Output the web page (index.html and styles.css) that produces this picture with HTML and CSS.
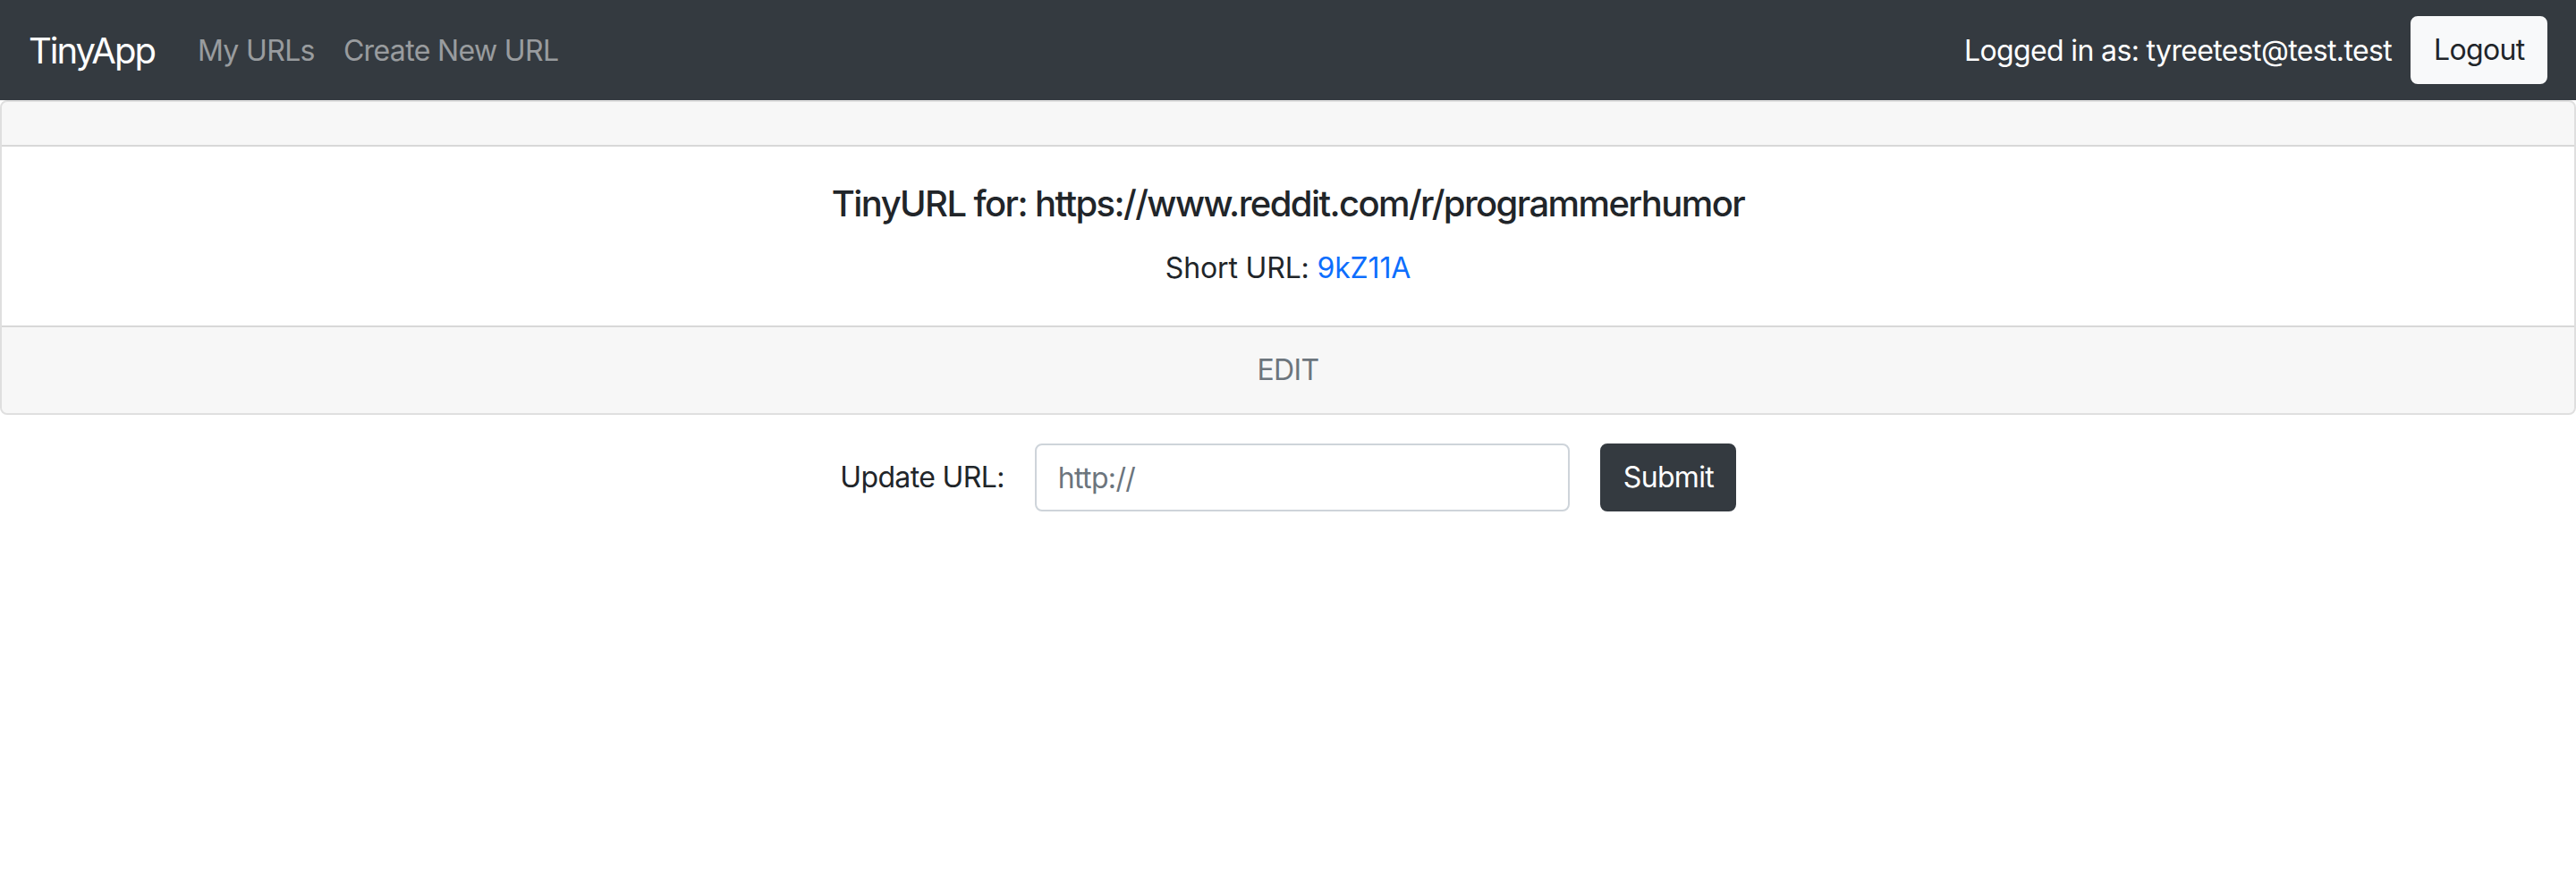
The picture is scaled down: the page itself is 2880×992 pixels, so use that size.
FILE: index.html
```html
<!DOCTYPE html>
<html lang="en">
<head>
<meta charset="utf-8">
<title>TinyApp</title>
<link rel="stylesheet" href="styles.css">
</head>
<body>
<nav class="navbar">
  <div class="nav-left">
    <a class="brand" href="#">TinyApp</a>
    <a class="nav-link" href="#">My URLs</a>
    <a class="nav-link" href="#">Create New URL</a>
  </div>
  <div class="nav-right">
    <span class="user">Logged in as: tyreetest@test.test</span>
    <button class="btn btn-light" type="button">Logout</button>
  </div>
</nav>
<div class="card">
  <div class="card-header"></div>
  <div class="card-body">
    <h5 class="card-title">TinyURL for: https://www.reddit.com/r/programmerhumor</h5>
    <p class="card-text">Short URL: <a class="link" href="#">9kZ11A</a></p>
  </div>
  <div class="card-footer">EDIT</div>
</div>
<form class="update-form">
  <label class="form-label" for="longURL">Update URL:</label>
  <input class="form-input" id="longURL" type="text" placeholder="http://">
  <button class="btn btn-dark" type="submit">Submit</button>
</form>
</body>
</html>
```

FILE: styles.css
```css
html, body {
  margin: 0;
  padding: 0;
  background: #fff;
}
body {
  font-family: Inter, "Noto Sans", "Liberation Sans", sans-serif;
  font-size: 32px;
  line-height: 1.5;
  letter-spacing: -0.02em;
  color: #212529;
}
a { text-decoration: none; }

.navbar {
  height: 112px;
  box-sizing: border-box;
  background: #343a40;
  padding: 2px 32px 0;
  display: flex;
  align-items: center;
  justify-content: space-between;
}
.nav-left, .nav-right {
  display: flex;
  align-items: center;
}
.brand {
  color: #fff;
  font-size: 40px;
  letter-spacing: -0.05em;
  line-height: 60px;
  margin-right: 32px;
}
.nav-link {
  color: rgba(255,255,255,.5);
  padding: 16px;
  line-height: 48px;
}
.user {
  color: #fff;
  margin-right: 21px;
  white-space: nowrap;
}
.btn {
  font-family: inherit;
  font-size: 32px;
  letter-spacing: -0.02em;
  line-height: 48px;
  height: 76px;
  padding: 0 24px;
  border-radius: 8px;
  border: 2px solid transparent;
  box-sizing: border-box;
  cursor: pointer;
}
.nav-right .btn {
  margin-top: -2px;
}
.btn-light {
  background: #f8f9fa;
  border-color: #f8f9fa;
  color: #212529;
  width: 153px;
}
.btn-dark {
  background: #343a40;
  border-color: #343a40;
  color: #fff;
  width: 152px;
}

.card {
  border: 2px solid rgba(0,0,0,.125);
  border-radius: 8px;
  overflow: hidden;
  text-align: center;
}
.card-header {
  height: 48px;
  background: rgba(0,0,0,.03);
  border-bottom: 2px solid rgba(0,0,0,.125);
}
.card-body {
  padding: 40px;
}
.card-title {
  margin: 0 0 24px;
  font-size: 40px;
  letter-spacing: -0.04em;
  line-height: 48px;
  font-weight: 500;
}
.card-text {
  margin: 0;
  letter-spacing: -0.005em;
}
.link { color: #0d6efd; }
.card-footer {
  background: rgba(0,0,0,.03);
  border-top: 2px solid rgba(0,0,0,.125);
  padding: 24px 32px;
  color: #6c757d;
}

.update-form {
  margin-top: 32px;
  display: flex;
  justify-content: center;
  align-items: center;
  gap: 34px;
}
.form-label {
  white-space: nowrap;
  flex-shrink: 0;
}
.form-input {
  width: 598px;
  height: 76px;
  box-sizing: border-box;
  border: 2px solid #ced4da;
  border-radius: 8px;
  padding: 0 24px;
  font-family: inherit;
  font-size: 32px;
  letter-spacing: -0.02em;
  color: #212529;
}
.form-input::placeholder {
  color: #6c757d;
}
```
